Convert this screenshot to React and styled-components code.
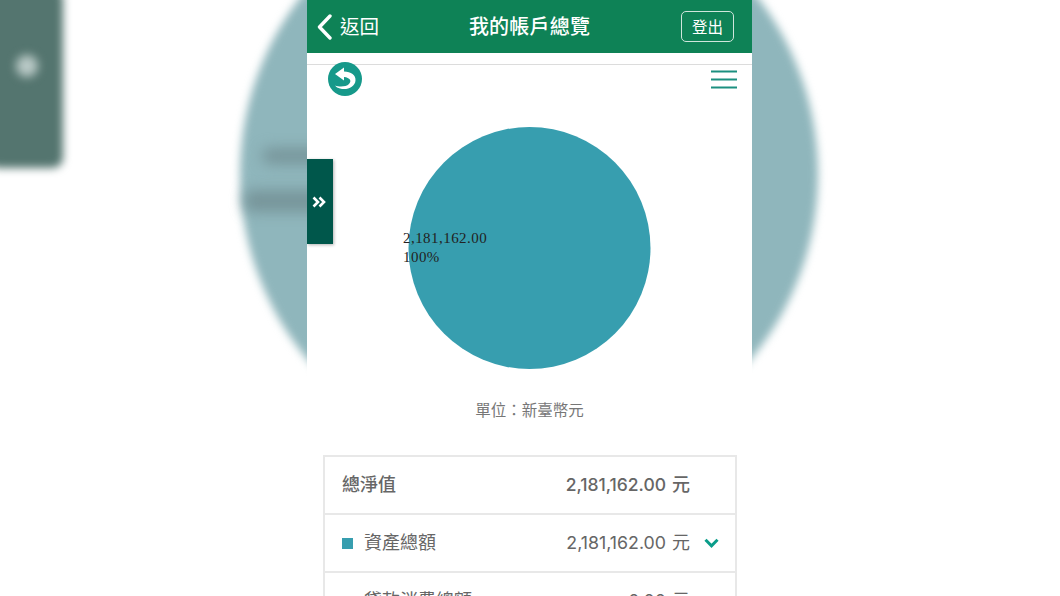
import React from "react";
import styled, { createGlobalStyle } from "styled-components";

const Global = createGlobalStyle`
  html, body { margin: 0; padding: 0; background: #fff; }
  body { font-family: "Noto Sans CJK TC", "Liberation Sans", sans-serif; }
`;

const Page = styled.div`
  position: relative;
  width: 1060px;
  height: 596px;
  overflow: hidden;
  background: #fff;
`;

const Backdrop = styled.div`
  position: absolute;
  inset: 0;
`;

const BackdropDisc = styled.div`
  position: absolute;
  left: 240px;
  top: -115px;
  width: 578px;
  height: 578px;
  border-radius: 50%;
  background: #8fb6bc;
  filter: blur(4px);
`;

const BackdropBand = styled.div`
  position: absolute;
  left: ${(p) => p.$left}px;
  top: ${(p) => p.$top}px;
  width: 90px;
  height: ${(p) => p.$h}px;
  border-radius: 8px;
  background: #77959a;
  filter: blur(7px);
`;

const BackdropCard = styled.div`
  position: absolute;
  left: -12px;
  top: -12px;
  width: 75px;
  height: 180px;
  border-radius: 10px;
  background: #54756f;
  filter: blur(4px);
`;

const BackdropDot = styled.div`
  position: absolute;
  left: 16px;
  top: 55px;
  width: 22px;
  height: 22px;
  border-radius: 50%;
  background: #b9c9c6;
  filter: blur(5px);
`;

const Phone = styled.main`
  position: relative;
  width: 445px;
  height: 596px;
  margin-left: 307px;
  background: #fff;
  display: flex;
  flex-direction: column;
  overflow: hidden;
`;

const TopBar = styled.header`
  flex: none;
  height: 53px;
  background: #0e8256;
  color: #fff;
  display: grid;
  grid-template-columns: 1fr auto 1fr;
  align-items: center;
  padding: 0 18px;
`;

const BackLink = styled.div`
  display: flex;
  align-items: center;
  gap: 8px;
  margin-left: -8px;
  font-size: 19.5px;
  line-height: 1;
  padding-bottom: 2px;
`;

const BackIcon = styled.svg`
  display: block;
  width: 15px;
  height: 26px;
  position: relative;
  top: 1px;
`;

const Title = styled.h1`
  margin: 0;
  padding-bottom: 2px;
  font-size: 20px;
  font-weight: 500;
  letter-spacing: 0.2px;
`;

const LogoutButton = styled.button`
  justify-self: end;
  width: 53px;
  height: 31px;
  padding: 0 0 2px;
  border: 1px solid #cfe6dc;
  border-radius: 5px;
  background: transparent;
  color: #fff;
  font: 400 15.5px "Noto Sans CJK TC", sans-serif;
`;

const ToolRow = styled.div`
  flex: none;
  height: 46px;
  margin-top: 11px;
  border-top: 1px solid #dcdcdc;
  display: flex;
  justify-content: space-between;
  align-items: flex-start;
  padding: 0 15px 0 21px;
  box-sizing: border-box;
`;

const RoundIcon = styled.svg`
  display: block;
  width: 34px;
  height: 34px;
  margin-top: -3px;
`;

const MenuIcon = styled.svg`
  display: block;
  width: 26px;
  height: 20px;
  margin-top: 5px;
`;

const ChartWrap = styled.div`
  flex: none;
  height: 263px;
  margin-top: 17px;
`;

const Chart = styled.svg`
  display: block;
  width: 445px;
  height: 263px;
`;

const ChartLabel = styled.text`
  font-family: "Liberation Serif", serif;
  font-size: 15px;
  letter-spacing: 0.45px;
  fill: #222;
`;

const Unit = styled.p`
  flex: none;
  margin: 0;
  padding-top: 4px;
  height: 30px;
  font-size: 15.5px;
  line-height: 30px;
  text-align: center;
  color: #777;
`;

const Table = styled.section`
  flex: none;
  margin: 31px 15px 0 16px;
  border: 2px solid #e8e8e8;
  border-bottom: none;
`;

const Row = styled.div`
  height: 52px;
  display: flex;
  align-items: center;
  padding: 0 16px 4px 17px;
  border-bottom: 2px solid #e8e8e8;
  color: #666;
  font-size: 18px;
`;

const Swatch = styled.span`
  flex: none;
  width: 11px;
  height: 11px;
  margin: 4px 11px 0 0;
  background: ${(p) => p.$color};
`;

const RowLabel = styled.span`
  flex: 1;
  font-weight: ${(p) => (p.$bold ? 500 : 400)};
`;

const Amount = styled.span`
  text-align: right;
  font-family: "Inter", "Noto Sans CJK TC", sans-serif;
  font-size: ${(p) => (p.$bold ? 17.5 : 17.8)}px;
  font-weight: ${(p) => (p.$bold ? 500 : 400)};
  white-space: nowrap;
`;

const Yuan = styled.span`
  font-family: "Noto Sans CJK TC", sans-serif;
  font-size: 18px;
  margin-left: 6px;
`;

const ChevronSlot = styled.span`
  flex: none;
  width: 29px;
  padding-top: 4px;
  display: flex;
  justify-content: flex-end;
`;

const Chevron = styled.svg`
  display: block;
  width: 15px;
  height: 10px;
`;

const SideTab = styled.div`
  position: absolute;
  left: 0;
  top: 159px;
  width: 26px;
  height: 85px;
  display: flex;
  align-items: center;
  justify-content: center;
  background: #00574b;
  box-shadow: 1px 1px 3px rgba(0, 0, 0, 0.3);
`;

const TabIcon = styled.svg`
  width: 14px;
  height: 12px;
  margin-right: 2px;
`;

const DownIcon = () => (
  <Chevron viewBox="0 0 15 10">
    <path d="M1.500 1.800l6 6 6-6" fill="none" stroke="#0a9d8a" strokeWidth="3" />
  </Chevron>
);

const rows = [
  { label: "資產總額", value: "2,181,162.00", color: "#379eaf" },
  { label: "貸款消費總額", value: "0.00", color: "#f3d9d0" },
];

export default function App() {
  return (
    <Page>
      <Global />
      <Backdrop>
        <BackdropDisc />
        <BackdropBand $left={262} $top={148} $h={16} />
        <BackdropBand $left={244} $top={190} $h={22} />
        <BackdropCard />
        <BackdropDot />
      </Backdrop>
      <Phone>
        <TopBar>
          <BackLink>
            <BackIcon viewBox="0 0 15 26">
              <path d="M13 2L2.500 13 13 24" fill="none" stroke="#fff" strokeWidth="3.400" strokeLinecap="round" strokeLinejoin="round" />
            </BackIcon>
            返回
          </BackLink>
          <Title>我的帳戶總覽</Title>
          <LogoutButton>登出</LogoutButton>
        </TopBar>
        <ToolRow>
          <RoundIcon viewBox="0 0 34 34">
            <circle cx="17" cy="17" r="17" fill="#16998a" />
            <path d="M7 12L16 5.500V9.500C23 9.500 28 13 27.500 18.500C27 25 19 28.500 12 26.500C10 26 8 25 7 23.500C11 25 18 25 21 22C24 19 22 15.500 16 15V18.500Z" fill="#fff" />
          </RoundIcon>
          <MenuIcon viewBox="0 0 26 20">
            <path d="M0 1.500h26M0 9.500h26M0 17.500h26" stroke="#1c9080" strokeWidth="2" />
          </MenuIcon>
        </ToolRow>
        <ChartWrap>
          <Chart viewBox="0 0 445 263">
            <circle cx="222.500" cy="121" r="121" fill="#379eaf" />
            <ChartLabel x="96" y="116">2,181,162.00</ChartLabel>
            <ChartLabel x="96" y="135">100%</ChartLabel>
          </Chart>
        </ChartWrap>
        <Unit>單位：新臺幣元</Unit>
        <Table>
          <Row>
            <RowLabel $bold>總淨值</RowLabel>
            <Amount $bold>2,181,162.00<Yuan>元</Yuan></Amount>
            <ChevronSlot />
          </Row>
          {rows.map((r) => (
            <Row key={r.label}>
              <Swatch $color={r.color} />
              <RowLabel>{r.label}</RowLabel>
              <Amount>{r.value}<Yuan>元</Yuan></Amount>
              <ChevronSlot><DownIcon /></ChevronSlot>
            </Row>
          ))}
        </Table>
        <SideTab>
          <TabIcon viewBox="0 0 14 12">
            <path d="M1.500 1.500L6 6l-4.500 4.500M7.500 1.500L12 6l-4.500 4.500" fill="none" stroke="#fff" strokeWidth="2.600" />
          </TabIcon>
        </SideTab>
      </Phone>
    </Page>
  );
}
